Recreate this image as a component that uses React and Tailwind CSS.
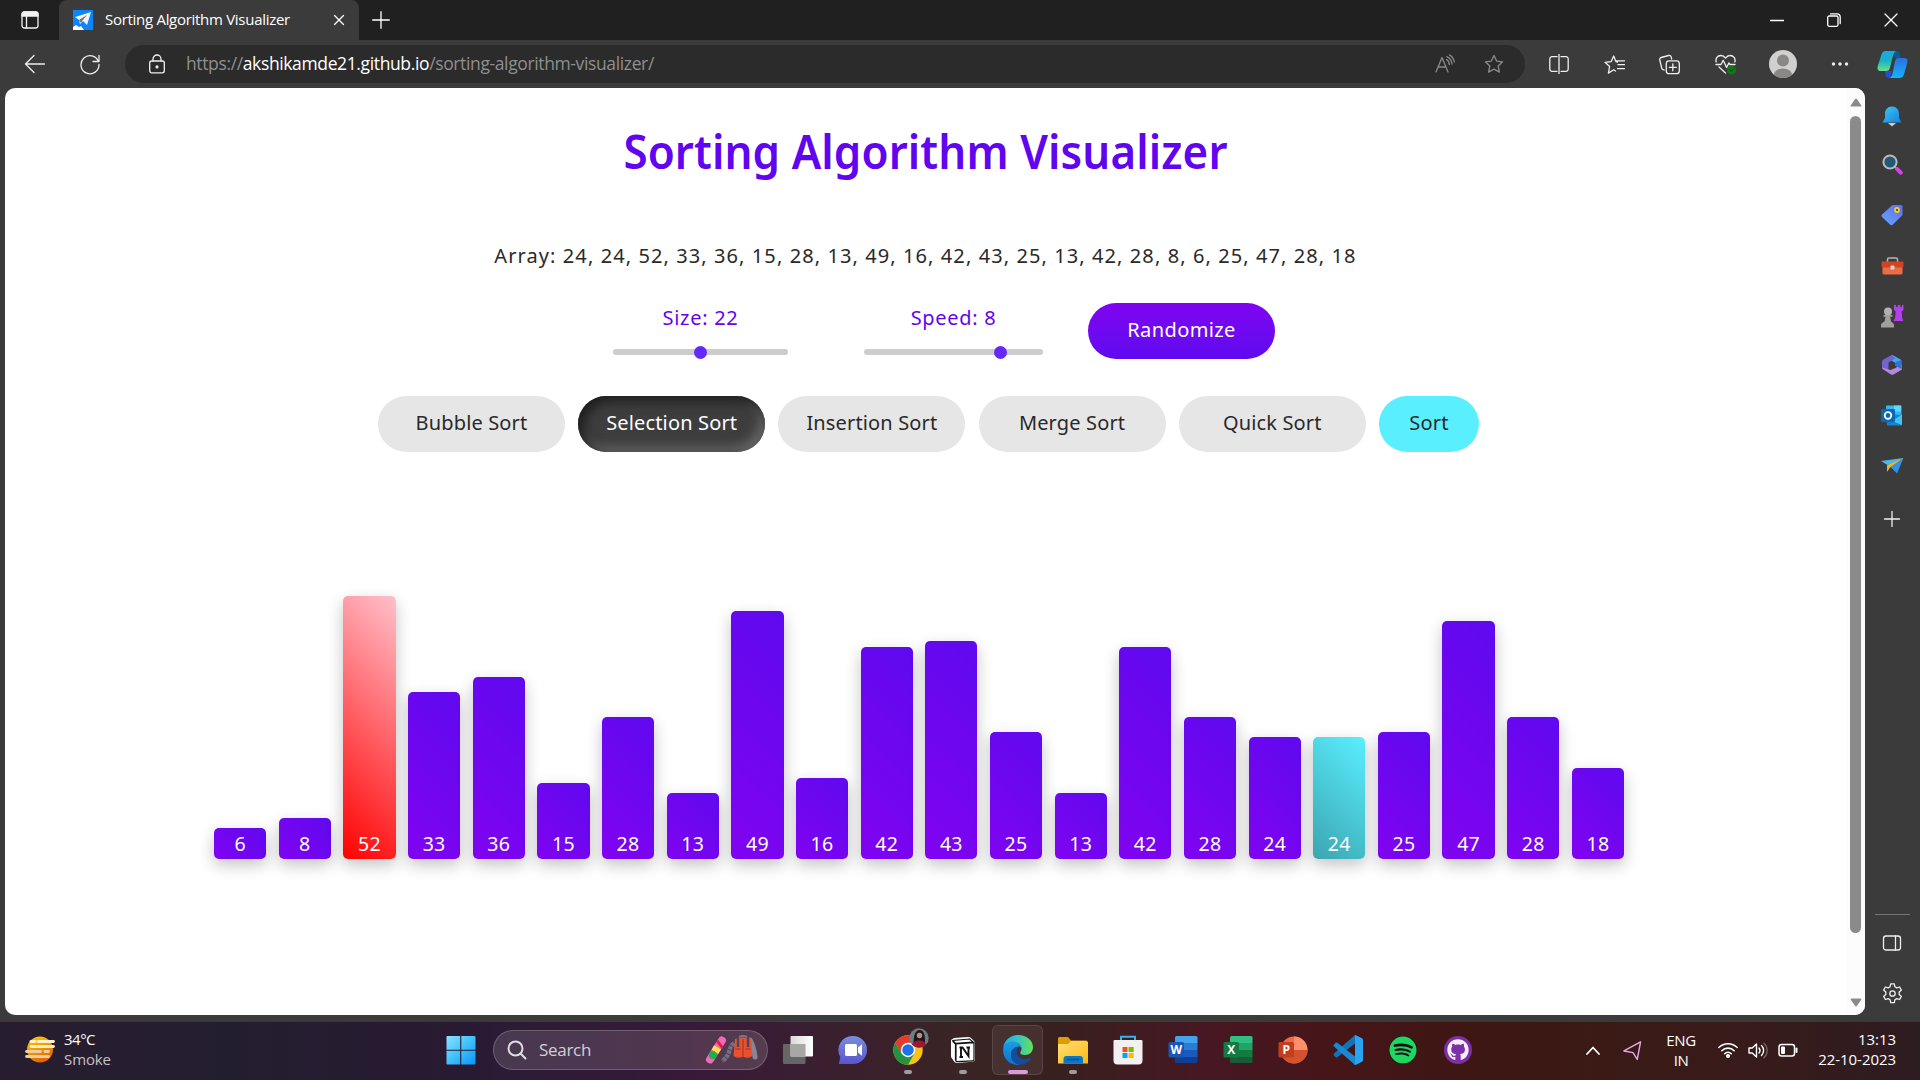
import React from "react";
import { FaSpotify, FaGithub } from "react-icons/fa";

const VALUES = [6, 8, 52, 33, 36, 15, 28, 13, 49, 16, 42, 43, 25, 13, 42, 28, 24, 24, 25, 47, 28, 18];
const ARRAY = [24, 24, 52, 33, 36, 15, 28, 13, 49, 16, 42, 43, 25, 13, 42, 28, 8, 6, 25, 47, 28, 18];

const Icon = ({ s = 20, h, box = "0 0 20 20", className = "", children }) => (
  <svg width={s} height={h || s} viewBox={box} fill="none" stroke="currentColor" strokeWidth="1.3" strokeLinecap="round" strokeLinejoin="round" className={"block shrink-0 " + className}>
    {children}
  </svg>
);

const STAR = "M10 1.5l2.6 5.6 6 .7-4.4 4.2 1.2 6.1L10 15.1l-5.4 3 1.2-6.1L1.4 7.8l6-.7z";

function TabStrip() {
  return (
    <div className="flex h-10 bg-[#202020] text-white">
      <div className="flex w-[59px] items-center justify-center">
        <Icon s={20} className="text-[#f2f2f2]">
          <rect x="2" y="2" width="16" height="16" rx="2.5" />
          <path d="M2 6V4.5A2.5 2.5 0 0 1 4.500 2h11A2.500 2.500 0 0 1 18 4.500V6z" fill="currentColor" />
          <path d="M6.500 6v12" />
        </Icon>
      </div>
      <div className="flex w-[300px] items-center rounded-t-lg bg-[#3b3b3b] pl-[14px]">
        <svg width="20" height="20" viewBox="0 0 20 20" className="shrink-0">
          <rect width="20" height="20" fill="#0a84ff" />
          <path d="M2 7l16-5-4 13-4-4-3 3-1-4z" fill="#f4f4f4" />
          <path d="M6 10l8-5-5 6-1 2z" fill="#6b6f78" />
          <path d="M0 20v-3l3-2 3 2 2-1 3 4z" fill="#fff" />
        </svg>
        <span className="ml-[12px] w-[200px] whitespace-nowrap pb-[2px] text-[15px] tracking-[-0.29px]">Sorting Algorithm Visualizer</span>
        <Icon s={12} box="0 0 12 12" className="ml-[28px]"><path d="M1.500 1.500l9 9M10.500 1.500l-9 9" /></Icon>
      </div>
      <div className="flex items-center pl-[13px]">
        <Icon s={18} box="0 0 18 18"><path d="M9 .7v16.600M.7 9h16.600" /></Icon>
      </div>
      <div className="ml-auto flex items-center gap-[43px] pr-[22px]">
        <Icon s={14} box="0 0 14 14"><path d="M.5 7.500h13" /></Icon>
        <Icon s={14} box="0 0 14 14"><rect x=".7" y="3" width="10.300" height="10.300" rx="1.500" /><path d="M3.500 .9h6.500a3.200 3.200 0 0 1 3.200 3.200v6.400" /></Icon>
        <Icon s={14} box="0 0 14 14"><path d="M1 1l12 12M13 1L1 13" /></Icon>
      </div>
    </div>
  );
}

function Toolbar() {
  return (
    <div className="flex h-12 items-center bg-[#3b3b3b] text-[#efefef]">
      <Icon s={22} box="0 0 22 22" className="ml-[24px]"><path d="M20.500 11H1.500M10 2.500L1.500 11l8.500 8.500" /></Icon>
      <Icon s={22} box="0 0 22 22" className="ml-[33px]"><path d="M19.400 8.500A9 9 0 1 0 20 11.500M20 2.500v6h-6" /></Icon>
      <div className="ml-[24px] flex h-[38px] w-[1400px] items-center rounded-full bg-[#2b2b2b]">
        <Icon s={20} className="ml-[22px]">
          <rect x="2.700" y="7" width="14.600" height="11.800" rx="2" /><path d="M6 7V5a4 4 0 0 1 8 0v2" /><circle cx="10" cy="12.900" r=".9" fill="currentColor" />
        </Icon>
        <span className="ml-[19px] whitespace-nowrap pb-[1px] text-[17.5px] tracking-[-0.37px] text-[#8f8f8f]">https://<span className="text-white">akshikamde21.github.io</span>/sorting-algorithm-visualizer/</span>
        <Icon s={20} className="ml-auto text-[#8b8b8b]">
          <path d="M1 18L7 3.500 13 18M3 13h8M11.500 5.500a6 6 0 0 1 2.800 5M12 2.600a9 9 0 0 1 5 7.400M14.500 .9A10 10 0 0 1 19.300 8" />
        </Icon>
        <Icon s={20} className="ml-[29px] mr-[21px] text-[#8b8b8b]"><path d={STAR} /></Icon>
      </div>
      <Icon s={20} className="ml-[24px]"><path d="M10 0v20M8 2.700H3A2.200 2.200 0 0 0 .8 5v10A2.200 2.200 0 0 0 3 17.300h5M12 2.700h5A2.200 2.200 0 0 1 19.200 5v10a2.200 2.200 0 0 1-2.200 2.300h-5" /></Icon>
      <Icon s={21} box="0 0 21 20" className="ml-[35px]">
        <path d="M13.500 7.500l-1.600-.4L9.700 1.500 7.200 7.100 1 7.800l4.600 4.200-1.200 6.600 5.300-3.300 1.800 1.200M14 10.200h6.500M11.500 6.300h9M13.500 14.200h7" />
      </Icon>
      <Icon s={21} box="0 0 21 20" className="ml-[34px]">
        <path d="M5.200 15.500L4 15.100a2 2 0 0 1-1.300-1.500L.8 5.500A2 2 0 0 1 2.200 3L9.700 1a2 2 0 0 1 2.400 1.300l.6 2.200" /><rect x="7.300" y="6.300" width="13" height="12.900" rx="2.800" /><path d="M13.800 9.300v7M10.300 12.800h7" />
      </Icon>
      <Icon s={22} box="0 0 22 20" className="ml-[35px]">
        <path d="M1.200 8C.2 4.500 2.500 1.500 5.800 1.500c2.200 0 3.600 1 4.700 2.600C11.600 2.500 13 1.500 15.200 1.500c3.300 0 5.600 3 4.600 6.500M1 10.500h5l2.200-4.200 3.400 7.200 2.200-4.500 1.200 1.500h5M4 13l6.500 6" />
        <circle cx="16.600" cy="16" r="4.400" fill="#107c10" stroke="none" /><path d="M14.700 16l1.400 1.300 2.400-2.400" stroke="#0a3a0a" strokeWidth="1" />
      </Icon>
      <svg width="28" height="28" viewBox="0 0 28 28" className="ml-[32px] shrink-0">
        <defs><clipPath id="avatar"><circle cx="14" cy="14" r="14" /></clipPath></defs>
        <g clipPath="url(#avatar)"><rect width="28" height="28" fill="#d2d0ce" /><circle cx="14" cy="10.500" r="6" fill="#8a8886" /><ellipse cx="14" cy="24.500" rx="9" ry="6" fill="#8a8886" /></g>
      </svg>
      <Icon s={18} h={4} box="0 0 18 4" className="ml-[34px]"><g fill="currentColor" stroke="none"><circle cx="2.500" cy="2" r="1.700" /><circle cx="9" cy="2" r="1.700" /><circle cx="15.500" cy="2" r="1.700" /></g></Icon>
      <svg width="31" height="29" viewBox="0 0 31 29" className="ml-[28px] shrink-0">
        <defs>
          <linearGradient id="cp1" x1="0" y1="0" x2="0" y2="1"><stop stopColor="#1aa7e8" /><stop offset=".5" stopColor="#18b3c4" /><stop offset="1" stopColor="#6fe08b" /></linearGradient>
          <linearGradient id="cp2" x1="0" y1="0" x2="0" y2="1"><stop stopColor="#2a6fe0" /><stop offset="1" stopColor="#14b4ff" /></linearGradient>
        </defs>
        <path d="M16 1h3.500c2 0 2.800 1 3.400 3l1 4h-6z" fill="#0b5a94" />
        <path d="M8 21h7l-2 7c-3 0-4-1-4.500-3z" fill="#1c4fe0" />
        <path d="M8.500 1H19c-2 1-2.600 3-3.200 5.500L13 17.500c-.6 2.500-1.500 3.500-4 3.500H4c-3 0-4-2-3.400-4.500L4.500 4.500C5.200 2.200 6.300 1 8.500 1z" fill="url(#cp1)" />
        <path d="M21.500 8H27c3 0 4 2 3.400 4.500l-3.500 12c-.8 2.300-2 3.500-4.200 3.500H12.500c2-1 2.700-3 3.300-5.500l2.200-11C18.600 9 19.300 8 21.500 8z" fill="url(#cp2)" />
      </svg>
    </div>
  );
}

const Slot = ({ h = "h-[50px]", children }) => <div className={"flex w-full items-center justify-center " + h}>{children}</div>;

function Sidebar() {
  return (
    <div className="flex w-[55px] flex-col items-center bg-[#3b3b3b] pr-[1px] pt-[3px] text-[#efefef]">
      <Slot>
        <svg width="20" height="21" viewBox="0 0 20 21">
          <defs><linearGradient id="bell" x1="0" y1="0" x2="1" y2="1"><stop stopColor="#3fc8f4" /><stop offset="1" stopColor="#1580dd" /></linearGradient></defs>
          <path d="M6 17h8l-4 3.500z" fill="#c9ced2" /><path d="M10 .5c-4.500 0-7 3.300-7 7.300V12l-2.500 4.500h19L17 12V7.800C17 3.800 14.500 .5 10 .5z" fill="url(#bell)" />
        </svg>
      </Slot>
      <Slot h="h-[47px]">
        <svg width="21" height="21" viewBox="0 0 21 21"><path d="M13 13l2 2" stroke="#aaa" strokeWidth="2" /><path d="M15.200 15.200l3.500 3.500" stroke="#d443ea" strokeWidth="4" strokeLinecap="round" /><circle cx="8" cy="8" r="6.600" fill="#205a78" stroke="#bdbab6" strokeWidth="2" /></svg>
      </Slot>
      <Slot h="h-[53px]">
        <svg width="22" height="22" viewBox="0 0 22 22">
          <defs><linearGradient id="tag" x1="1" y1="0" x2="0" y2="1"><stop stopColor="#5e6fe8" /><stop offset="1" stopColor="#66a6ff" /></linearGradient></defs>
          <path d="M11.500 1H20q1.500 0 1.500 1.500V11L12 20.500q-1.500 1.300-3 0L1 13q-1-1.500 0-2.500z" fill="url(#tag)" /><circle cx="16" cy="6" r="2.900" fill="#f4cd2a" /><circle cx="16" cy="6" r="1" fill="#333" />
        </svg>
      </Slot>
      <Slot>
        <svg width="23" height="18" viewBox="0 0 23 18"><path d="M6.500 5V2.500Q6.500 1 8 1h7q1.500 0 1.500 1.500V5" fill="none" stroke="#b8b4b0" strokeWidth="1.500" /><rect x="1.500" y="7" width="20" height="10.500" rx="1.500" fill="#ef6b45" /><path d="M.5 5.500Q.5 4.500 1.500 4.500h20q1 0 1 1V9q0 1.500-2 1.500h-18Q.5 10.500 .5 9z" fill="#cf4524" /><rect x="9.500" y="8.500" width="4" height="4" rx="1" fill="#d5d5d5" /></svg>
      </Slot>
      <Slot h="h-[49px]">
        <svg width="24" height="24" viewBox="0 0 24 24">
          <path d="M14 1h2v2h1.700V1h2.600v2H22V1h1.500v5l-2 1.500.8 7 1 2.500H13.500l1.600-3 .6-6.500L14 6z" fill="#b63ef2" />
          <circle cx="8" cy="7.500" r="4" fill="#b4b2b0" /><path d="M3.500 11h9v1.700h-2.300L11 17.500q3 1.500 3 3.500v2.500H1V21q0-2 3.500-3.500l1-4.800h-2z" fill="#a19f9d" />
        </svg>
      </Slot>
      <Slot>
        <svg width="22" height="22" viewBox="0 0 22 22">
          <path d="M11 .8l9 5v8.500l-5.500-2.500V9L8 5z" fill="#3ea7ee" /><path d="M11 .8L2 5.800Q1 6.500 1 8v6.500L6 16l1.500-1V8.500L14 4.500z" fill="#7263cf" /><path d="M1 13.500q0 1 1 1.700l8 5.300q1 .7 2.500 0l8.500-5V10l-6.500 4-5 2z" fill="#b688da" /><path d="M20.800 6v9l-6.300-3V8z" fill="#356fd5" />
        </svg>
      </Slot>
      <Slot>
        <svg width="22" height="21" viewBox="0 0 22 21"><rect x="5" y=".5" width="15.500" height="14" rx="1" fill="#36b5f0" /><path d="M13 .5h7v6h-7z" fill="#5bd9ff" /><path d="M5 9l16 1v9.500q0 1-1 1H6z" fill="#1685ce" /><path d="M21 9.500L11 16l10 4z" fill="#40c4f5" /><rect x="0" y="4" width="14" height="13" rx="1.300" fill="#0868b8" /><circle cx="7" cy="10.500" r="3.300" fill="none" stroke="#fff" strokeWidth="1.800" /></svg>
      </Slot>
      <Slot>
        <svg width="23" height="17" viewBox="0 0 23 17"><path d="M0 4L22.500 1 8 9z" fill="#4db7e8" /><path d="M22.500 1L16 16.500 9.500 10z" fill="#3192ea" /><path d="M22.500 1L6 8.500V15l3-4.500z" fill="#f3b70f" /></svg>
      </Slot>
      <Slot h="h-[58px]"><Icon s={16} box="0 0 16 16"><path d="M8 .5v15M.5 8h15" /></Icon></Slot>
      <div className="mt-auto h-px w-[35px] shrink-0 bg-[#757575]" />
      <Slot h="h-[55px]"><Icon s={20}><rect x="1.500" y="3" width="17" height="14" rx="2.500" /><path d="M13.500 3v14" /></Icon></Slot>
      <div className="w-full pb-[4px]"><Slot h="h-[47px]"><Icon s={21} box="0 0 21 21"><path d="M8.700 .9h3.600l.6 2.900 1.900 1.100 2.800-.9 1.800 3.100-2.200 2v2.300l2.200 2-1.800 3.100-2.800-.9-1.900 1.100-.6 2.900H8.700l-.6-2.900-1.900-1.100-2.800.9-1.800-3.100 2.200-2V9.100l-2.200-2 1.800-3.100 2.800.9 1.900-1.100z" /><circle cx="10.500" cy="10.500" r="2.700" /></Icon></Slot></div>
    </div>
  );
}

function Slider({ label, className, thumb, track }) {
  return (
    <div className={className}>
      <div className="pt-[1px] text-center text-[20px] leading-[28px] text-[#6104f0]">{label}</div>
      <div className="mt-[13px] flex h-[14px] items-center">
        <div className={"h-[6px] rounded-l-full bg-[#cccccc] " + thumb} />
        <div className="relative z-10 -mx-[6.5px] h-[13px] w-[13px] shrink-0 rounded-full bg-[#6528f7]" />
        <div className={"h-[6px] rounded-r-full bg-[#cccccc] " + track} />
      </div>
    </div>
  );
}

const BASE = "flex h-[56px] items-center justify-center rounded-[28px] pb-[2px] text-[20px] whitespace-nowrap ";

function Page() {
  return (
    <div className="flex h-[927px] w-[1860px] overflow-hidden rounded-[10px] bg-white">
      <div className="flex w-[1841px] flex-col font-['Noto_Sans'] text-[#292929]">
        <h1 className="mt-[33px] scale-x-[0.925] text-center text-[47.5px] leading-[60px] font-semibold tracking-[0.1px] text-[#6104f0]">Sorting Algorithm Visualizer</h1>
        <p className="mt-[60px] text-center text-[20px] leading-[30px] tracking-[1.09px]">Array: {ARRAY.join(", ")}</p>
        <div className="mt-[32px] flex pl-[608px] tracking-[0.7px]">
          <Slider label="Size: 22" className="w-[175px]" thumb="w-[87px]" track="w-[88px]" />
          <Slider label="Speed: 8" className="ml-[76px] w-[179px]" thumb="w-[136px]" track="w-[43px]" />
          <button className={BASE + "ml-[45px] w-[187px] bg-linear-to-b from-[#8003f1] to-[#5f09ef] tracking-[0.4px] text-white"}>Randomize</button>
        </div>
        <div className="mt-[37px] flex gap-[13.200px] pl-[373px] tracking-[0.15px]">
          <button className={BASE + "w-[187px] bg-[#e6e6e6]"}>Bubble Sort</button>
          <button className={BASE + "w-[187px] bg-[#3d3d3d] text-white shadow-[inset_5px_5px_12px_#1c1c1c,inset_-5px_-5px_12px_#6a6a6a]"}>Selection Sort</button>
          <button className={BASE + "w-[187px] bg-[#e6e6e6]"}>Insertion Sort</button>
          <button className={BASE + "w-[187px] bg-[#e6e6e6]"}>Merge Sort</button>
          <button className={BASE + "w-[187px] bg-[#e6e6e6]"}>Quick Sort</button>
          <button className={BASE + "w-[100px] bg-[#5aefff]"}>Sort</button>
        </div>
        <div className="flex h-[407px] items-end gap-[12.4px] pl-[209px]">
          {VALUES.map((v, i) => (
            <div
              key={i}
              style={{ height: v * 5.045 + 0.6 }}
              className={
                "flex w-[52.270px] shrink-0 items-end justify-center rounded-[5px] pb-[2px] text-[19.5px] leading-[26px] tracking-[0.3px] text-white shadow-[0_6px_16px_rgba(0,0,0,0.24)] " +
                (i === 2
                  ? "bg-[linear-gradient(45deg,#ff0000,#ffc0cb)]"
                  : i === 17
                    ? "bg-[linear-gradient(45deg,#3ba5b1,#5aefff)]"
                    : "bg-[linear-gradient(45deg,#8003f1,#5f09ef)]")
              }
            >
              {v}
            </div>
          ))}
        </div>
      </div>
      <div className="flex w-[19px] flex-col items-center bg-[#fcfcfc] pt-[10px]">
        <svg width="12" height="9" viewBox="0 0 12 9"><path d="M6 .5q.5 0 1 .7l4.200 6q.6 1.300-.7 1.300h-9Q.2 8.500 .8 7.200l4.200-6Q5.500 .5 6 .5z" fill="#8b8b8b" /></svg>
        <div className="mt-[9px] h-[817px] w-[11px] rounded-full bg-[#8b8b8b]" />
        <svg width="12" height="9" viewBox="0 0 12 9" className="mt-[65px]"><path d="M6 8.500q.5 0 1-.7l4.200-6Q11.800 .5 10.500 .5h-9Q.2 .5 .8 1.800l4.200 6q.5 .7 1 .7z" fill="#8b8b8b" /></svg>
      </div>
    </div>
  );
}

const Office = ({ letter, a, b, c, d, tile, round }) => (
  <svg width="30" height="30" viewBox="0 0 30 30">
    <defs><clipPath id={"clip" + letter}>{round ? <circle cx="16" cy="15" r="13.500" /> : <rect x="7" y="1" width="22.500" height="27" rx="1.500" />}</clipPath></defs>
    <g clipPath={`url(#clip${letter})`}>
      {round ? (
        <><rect width="30" height="30" fill="#ed6c47" /><path d="M16 0h14v15H16z" fill="#ff8f6b" /><path d="M0 15h30v15H0z" fill="#d35230" /></>
      ) : (
        <><rect x="7" y="0" width="23" height="8" fill={a} /><rect x="7" y="8" width="23" height="7" fill={b} /><rect x="7" y="15" width="23" height="7" fill={c} /><rect x="7" y="22" width="23" height="8" fill={d} /></>
      )}
    </g>
    <rect x="0.500" y="7" width="15.500" height="15.500" rx="1.500" fill={tile} />
    <text x="8.200" y="19" textAnchor="middle" fill="#fff" fontFamily="Open Sans, sans-serif" fontWeight="700" fontSize="12">{letter}</text>
  </svg>
);

const TaskIcon = ({ children, dot }) => (
  <div className="flex h-[50px] w-[55px] flex-col items-center pt-[10px]">
    <div className="flex h-[30px] items-center">{children}</div>
    {dot && <div className="mt-[5px] h-1 w-2 rounded-full bg-[#a39c9f]" />}
  </div>
);

function SearchArt() {
  return (
    <svg width="54" height="30" viewBox="0 0 54 30">
      <g transform="rotate(32 12 15)"><rect x="8" y="0" width="8" height="30" rx="3.500" fill="#f06ab8" /><path d="M8 5l8 3v3l-8-3z" fill="#e0203a" /><rect x="8" y="12" width="8" height="5" fill="#ffe14a" /><circle cx="12" cy="21" r="4" fill="#1fae4b" /></g>
      <path d="M30 8q-4 4-5 9-2 6-7 9" fill="none" stroke="#717089" strokeWidth="4.500" strokeDasharray="3.500 .8" />
      <path d="M46 5q4 7 5 17" fill="none" stroke="#85869c" strokeWidth="5" strokeLinecap="round" />
      <path d="M31 4q8-3 16 0l1.500 17q-4 3-8.500 1h-2q-4 2-8.500-1z" fill="#e8502f" /><path d="M34 3v9M44 3v9" stroke="#4b4760" strokeWidth="2.500" /><path d="M35 2q4-2 8 0" stroke="#77788f" strokeWidth="2" fill="none" /><path d="M39 4v18M31.500 14h5M41.500 14h5" stroke="#a5301c" />
    </svg>
  );
}

function Taskbar() {
  return (
    <div className="flex h-[59px] border-t border-white/10 bg-[linear-gradient(90deg,#281d30_0%,#231e2f_12%,#281a32_24%,#2c1b37_27%,#38193a_36%,#3a1f30_43%,#3a2424_50%,#38201f_55%,#471723_63%,#451518_70%,#3c1713_78%,#3b1a16_84%,#371b1b_92%,#2d1c21_100%)] text-white">
      <div className="flex w-[434px] pl-[25px] pt-[14px]">
        <svg width="30" height="28" viewBox="0 0 30 28">
          <defs><linearGradient id="sun" x1="0" y1="0" x2=".4" y2="1"><stop stopColor="#ffd000" /><stop offset="1" stopColor="#e8650a" /></linearGradient></defs>
          <circle cx="15" cy="13.500" r="13" fill="url(#sun)" />
          <g stroke="#fff0c8" strokeWidth="2.800" strokeLinecap="round"><path d="M6 5.500h4M13 5.500h15.500M6 10.500h22.500" /><path d="M1.500 15.500h14M20 15.500h3.500M1.500 20.500h22" stroke="#e8d29a" /></g>
        </svg>
        <div className="ml-[9px] -mt-[7px] text-[15px] leading-[20px]">
          <div className="tracking-[-0.5px]">34°C</div>
          <div className="tracking-[-0.1px] text-[#c5c0c8]">Smoke</div>
        </div>
      </div>
      <div className="flex pt-[3px]">
        <TaskIcon>
          <svg width="30" height="30" viewBox="0 0 30 30" className="mr-[1px]"><defs><linearGradient id="win" x1="0" y1="0" x2="1" y2="1"><stop stopColor="#8be2ff" /><stop offset=".5" stopColor="#3fc1fb" /><stop offset="1" stopColor="#0a92fb" /></linearGradient></defs><path d="M.5 2q0-1 1-1h12.700v13.700H.5zM15.300 1h13.200q1 0 1 1v12.700H15.300zM.5 15.800h13.700v13.700H1.500q-1 0-1-1zM15.300 15.800h14.200v12.700q0 1-1 1H15.300z" fill="url(#win)" /></svg>
        </TaskIcon>
        <div className="ml-[4px] mt-[5px] flex h-[40px] w-[275px] items-center rounded-full border border-white/20 bg-[linear-gradient(90deg,#473850,#51364f_70%,#553c4e)] pl-[13px]">
          <Icon s={20} className="text-[#e0dce2]"><g strokeWidth="2"><circle cx="8.500" cy="8.500" r="7" /><path d="M13.500 13.500l5 5" /></g></Icon>
          <span className="ml-[12px] text-[17px] tracking-[-0.3px] text-[#d5ced6]">Search</span>
          <div className="ml-auto pr-[9px]"><SearchArt /></div>
        </div>
        <div className="w-[2px]" />
        <TaskIcon>
          <svg width="30" height="30" viewBox="0 0 30 30"><defs><linearGradient id="tv"><stop stopColor="#d9d9d9" /><stop offset="1" stopColor="#fff" /></linearGradient></defs><rect x="0" y="9" width="22.500" height="20" rx="1" fill="#666" /><rect x="7.500" y="1" width="22.500" height="20.500" rx="1" fill="url(#tv)" /><rect x="7.500" y="9" width="15" height="12.500" fill="#a9a7a6" /></svg>
        </TaskIcon>
        <TaskIcon>
          <svg width="30" height="30" viewBox="0 0 30 30"><defs><linearGradient id="chat" x1="0" y1="0" x2="0" y2="1"><stop stopColor="#7b8ddb" /><stop offset="1" stopColor="#5a55cf" /></linearGradient></defs><path d="M15 1a14 14 0 1 1 0 28H1.500q-.8 0-.5-1l1.300-6A14 14 0 0 1 15 1z" fill="url(#chat)" /><rect x="7" y="9" width="12" height="12" rx="1.500" fill="#fff" /><path d="M20 12.500l4-3.200v11.400l-4-3.200z" fill="#fff" /></svg>
        </TaskIcon>
        <TaskIcon dot>
          <div className="relative">
            <svg width="30" height="30" viewBox="0 0 48 48"><circle cx="24" cy="24" r="23.500" fill="#fbc116" /><path d="M24 .5A23.500 23.500 0 0 1 44.500 12.500H24l-10 17.300L3.600 12.300A23.500 23.500 0 0 1 24 .5z" fill="#e33b2e" /><path d="M3.600 12.300L14 30l10 5.300L18.500 47A23.500 23.500 0 0 1 3.600 12.300z" fill="#229342" /><path d="M34 29.800L24 47.500a23.500 23.500 0 0 1-6-.6L24 35z" fill="#229342" /><circle cx="24" cy="24" r="11.500" fill="#fff" /><circle cx="24" cy="24" r="9.200" fill="#1a73e8" /></svg>
            <svg width="20" height="20" viewBox="0 0 20 20" className="absolute -top-[7px] left-[16px]">
              <defs><clipPath id="profile"><circle cx="10" cy="10" r="9.700" /></clipPath></defs>
              <g clipPath="url(#profile)"><rect width="20" height="20" fill="#6d7f84" /><path d="M4.500 16Q4.500 2 10.500 2T16 15z" fill="#21171b" /><path d="M2 20q1-8 8-7.500 7-.5 8 7.500z" fill="#9c1734" /><circle cx="10.500" cy="7.500" r="2.700" fill="#c08e80" /></g>
            </svg>
          </div>
        </TaskIcon>
        <TaskIcon dot>
          <svg width="26" height="28" viewBox="0 0 26 28"><path d="M1 4L4 2 18 1q2 0 3 1l3 3q1 1 1 2.500V23q0 2.500-2.500 2.700L7 27q-1.500 0-2.500-1L2 22.500Q1 21.500 1 20z" fill="#fff" /><path d="M2.500 5l3 3v16.500M6 8l18-1.300v16.500q0 1.500-1.500 1.600L7 25.700q-1 0-1-1zM3 4.500l2.500 2.800L23 6l-3.500-3z" fill="none" stroke="#111" strokeWidth="1.200" /><path d="M9.500 11.500h3l6 8.500v-8M9.500 21h3.500M11 12v9M16.500 11.500H20" fill="none" stroke="#111" strokeWidth="1.900" /></svg>
        </TaskIcon>
        <div className="mx-[2px] flex h-[50px] w-[51px] flex-col items-center rounded-md border border-white/10 bg-white/[0.07] pt-[9px]">
          <svg width="30" height="30" viewBox="0 0 30 30">
            <defs><linearGradient id="e1"><stop stopColor="#28a8ea" /><stop offset=".5" stopColor="#37c5c4" /><stop offset="1" stopColor="#66e34c" /></linearGradient><linearGradient id="e2" x1="0" y1="0" x2="0" y2="1"><stop stopColor="#1b9de2" /><stop offset="1" stopColor="#0a72ce" /></linearGradient></defs>
            <path d="M.2 13.500C1 5.500 7 0 15 0c9 0 15 6 15 12 0 5-3.500 8-8 8-3 0-4.800-1-4.800-2.300 0-1 1.300-1.500 1.300-4C18.500 9.500 14 7 9.500 7 4.500 7 1.500 10 .2 13.500z" fill="url(#e1)" />
            <path d="M.2 14C.8 9 4.500 6.500 9.500 6.500c5 0 8.500 2.800 8.900 6C15 10 8 13 8 20c0 5 4 9 9 9.800C7 31.500-.8 23 .2 14z" fill="url(#e2)" />
            <path d="M17.800 11.500C12 11 8 15 8 20c0 6 5 9.500 10 9.500 4 0 7.500-2 9.700-5.500.4-.8-.2-1.200-.9-.9-7 3-13-1-13-6.200 0-2.500 1.600-4.600 4-5.400z" fill="#114f9e" />
          </svg>
          <div className="mt-[5px] h-1 w-5 rounded-full bg-[#d99ae0]" />
        </div>
        <TaskIcon dot>
          <svg width="30" height="30" viewBox="0 0 30 30"><defs><linearGradient id="fo" x1="0" y1="0" x2="1" y2="1"><stop stopColor="#ffe07a" /><stop offset="1" stopColor="#f9b90c" /></linearGradient></defs><path d="M0 3.500Q0 2 1.500 2H10l3 3.500h15.500V12H0z" fill="#dd9c08" /><path d="M0 9h10l3-3h15.500Q30 6 30 7.500V28.500H0z" fill="url(#fo)" /><path d="M5.500 28.500V24q0-3 3-3h13.500q3 0 3 3v4.500z" fill="#0b76c4" /><path d="M9 24.500h12" stroke="#084a86" strokeWidth="1.300" /></svg>
        </TaskIcon>
        <TaskIcon>
          <svg width="30" height="30" viewBox="0 0 30 30"><path d="M8 7V1.800h14V7" fill="none" stroke="#2fb4ee" strokeWidth="2" /><path d="M.5 6q0-1 1-1h27q1 0 1 1v19.500q0 4-4 4h-21q-4 0-4-4z" fill="#f1f1f1" /><path d="M9.500 12h5v5h-5z" fill="#f25022" /><path d="M15.500 12h5.200v5h-5.200z" fill="#7fba00" /><path d="M9.500 18h5v5h-5z" fill="#00a4ef" /><path d="M15.500 18h5.200v5h-5.200z" fill="#ffb900" /></svg>
        </TaskIcon>
        <TaskIcon><Office letter="W" a="#41a5ee" b="#2b7cd3" c="#185abd" d="#103f91" tile="#1d55b5" /></TaskIcon>
        <TaskIcon><Office letter="X" a="#2fc081" b="#21a366" c="#107c41" d="#185c37" tile="#127a42" /></TaskIcon>
        <TaskIcon><Office letter="P" tile="#c43e1c" round /></TaskIcon>
        <TaskIcon>
          <svg width="30" height="30" viewBox="0 0 30 30"><path d="M22 0L1 18.500q-1 1 0 2l1.700 1.700q.8.500 1.600 0L22 8.500z" fill="#1074ba" /><path d="M22 30L1 11.500q-1-1 0-2l1.700-1.700q.8-.5 1.600 0L22 21.500z" fill="#1b88cf" /><path d="M21 .8Q21.800 0 23 .3l6 2.900q1 .6 1 1.500v20.600q0 .9-1 1.500l-6 2.900q-1.200.3-2-.5 1 .2 1-1V1.800q0-1.200-1-1z" fill="#2aa4f2" /></svg>
        </TaskIcon>
        <TaskIcon><div className="rounded-full bg-[#101010]"><FaSpotify size={28} color="#1ed760" /></div></TaskIcon>
        <TaskIcon><div className="flex h-7 w-7 items-center justify-center rounded-full bg-[#7d2fa6]"><FaGithub size={22} color="#f4eef8" /></div></TaskIcon>
      </div>
      <div className="ml-auto flex items-center pb-[2px] pr-[24px] text-[15px] leading-[20px]">
        <Icon s={14} h={9} box="0 0 14 9"><path d="M1 8l6-6.500L13 8" strokeWidth="1.800" /></Icon>
        <Icon s={19} className="ml-[23px] text-[#e6a8ec]"><path d="M18.500 1L1 10.500l9.500 1.700L15 19.300z" strokeWidth="1.500" /></Icon>
        <div className="ml-[24px] w-[30px] pb-[1px] text-center tracking-[-0.4px]">ENG<br />IN</div>
        <Icon s={20} className="ml-[22px]"><g strokeWidth="1.600"><path d="M.8 7.500a13 13 0 0 1 18.400 0M3.800 10.700a8.800 8.800 0 0 1 12.400 0M6.700 13.700a4.700 4.700 0 0 1 6.600 0" /><circle cx="10" cy="16" r="1.300" fill="currentColor" /></g></Icon>
        <Icon s={21} box="0 0 21 20" className="ml-[10px]"><path d="M1 7.500h3.200L8.500 3.500v13L4.200 12.500H1zM11 7.500a4 4 0 0 1 0 5M13.500 5a7 7 0 0 1 0 10" strokeWidth="1.400" /><path d="M16 2.700a10 10 0 0 1 0 14.600" stroke="#77605f" /></Icon>
        <Icon s={20} className="ml-[9px]"><rect x="1" y="4.500" width="15.500" height="11.500" rx="2.500" strokeWidth="1.500" /><path d="M18.500 8.500v3.500" strokeWidth="2" /><rect x="3" y="6.500" width="4" height="7.500" rx="1" fill="currentColor" stroke="none" /></Icon>
        <div className="ml-[18px] w-[80px] whitespace-nowrap pb-[2px] text-right tracking-[-0.05px]">13:13<br />22-10-2023</div>
      </div>
    </div>
  );
}

export default function App() {
  return (
    <div className="flex h-[1080px] w-[1920px] flex-col overflow-hidden bg-[#3b3b3b] font-['Open_Sans','Noto_Sans',sans-serif]">
      <TabStrip />
      <Toolbar />
      <div className="flex h-[933px] pl-[5px]">
        <Page />
        <Sidebar />
      </div>
      <Taskbar />
    </div>
  );
}
